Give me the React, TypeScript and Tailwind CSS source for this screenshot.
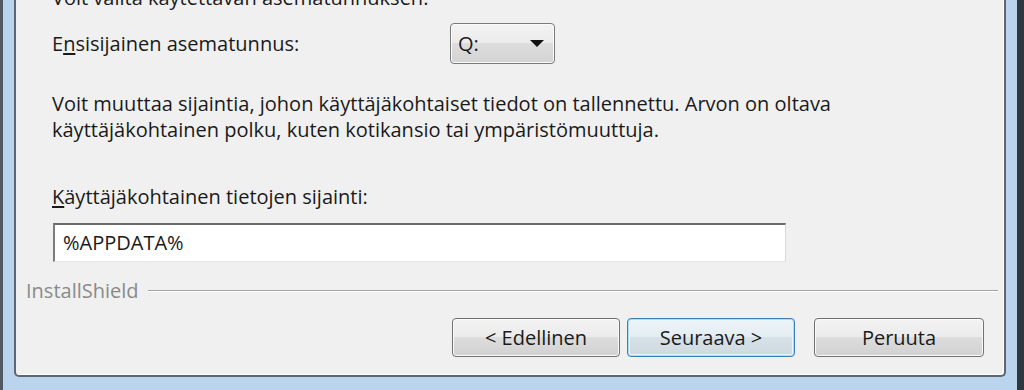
const font = { fontFamily: '"Open Sans", "Noto Sans", sans-serif' }

const WinButton = ({ label, isDefault = false, width = 'w-[168px]' }: { label: string; isDefault?: boolean; width?: string }) => {
  const look = isDefault
    ? 'border-[#3c7fb1] bg-[linear-gradient(#eef5f9_0%,#e4edf2_50%,#d7e2e8_50%,#cdd9e0_100%)] shadow-[inset_0_0_0_1px_#a9dff6,inset_0_0_0_2px_#e6f6fd]'
    : 'border-[#707070] bg-[linear-gradient(#f3f3f3_0%,#ebebeb_50%,#dddddd_50%,#d1d1d1_100%)] shadow-[inset_0_0_0_1px_#fbfbfb]'
  return (
    <button className={`${width} h-[39px] rounded-[4px] border text-[20px] text-[#1a1a1a] ${look}`} style={font}>
      {label}
    </button>
  )
}

const App = () => {
  return (
    <div className="w-[1024px] h-[390px] overflow-hidden flex bg-[#bad4ee] border-l-[3px] border-l-[#4f5863] border-r-[7px] border-r-[#30363d] pl-[11px] pr-[11px] pb-[13px]">
      <div className="flex-1 flex flex-col bg-[#f0f0f0] border-x-2 border-b-2 border-[#5e6771] rounded-b-[5px] shadow-[inset_-1px_-1px_0_#ffffff] text-[20px] text-[#1a1a1a]" style={font}>
        <div className="pl-[36px] flex flex-col">
          <p className="-mt-[15px] h-[26px] leading-[26px] whitespace-nowrap">Voit valita käytettävän asematunnuksen.</p>

          <div className="mt-[12px] flex items-center h-[41px]">
            <span className="w-[398px]">
              E<span className="underline underline-offset-2">n</span>sisijainen asematunnus:
            </span>
            <div className="w-[105px] h-[41px] flex items-center justify-between pl-[7px] pr-[10px] rounded-[4px] border border-[#7a7a7a] bg-[linear-gradient(#f3f3f3_0%,#ebebeb_50%,#dddddd_50%,#d3d3d3_100%)] shadow-[inset_0_0_0_1px_#fbfbfb]">
              <span>Q:</span>
              <svg width="14" height="7" viewBox="0 0 14 7">
                <path d="M0 0 H14 L7 7 Z" fill="#111" />
              </svg>
            </div>
          </div>

          <p className="mt-[27px] leading-[26px] whitespace-nowrap">
            Voit muuttaa sijaintia, johon käyttäjäkohtaiset tiedot on tallennettu. Arvon on oltava
            <br />
            käyttäjäkohtainen polku, kuten kotikansio tai ympäristömuuttuja.
          </p>

          <p className="mt-[41px] leading-[26px] whitespace-nowrap">
            <span className="underline underline-offset-2">K</span>äyttäjäkohtainen tietojen sijainti:
          </p>

          <div className="mt-[13px] ml-[1px] w-[733px] h-[39px] flex items-center pl-[8px] bg-white border-t-2 border-l-2 border-t-[#6a6a6a] border-l-[#7c7c7c] border-r border-b border-r-[#d8d8d8] border-b-[#e6e6e6]">
            %APPDATA%
          </div>
        </div>

        <div className="mt-[16px] h-[26px] flex items-center pl-[10px] pr-[6px]">
          <span className="text-[#8a8a8a]">InstallShield</span>
          <div className="flex-1 ml-[9px] h-[2px] border-t border-t-[#a3a3a3] border-b border-b-[#ffffff]" />
        </div>

        <div className="mt-[14px] flex justify-end pr-[20px]">
          <WinButton label="< Edellinen" />
          <div className="w-[7px]" />
          <WinButton label="Seuraava >" isDefault />
          <div className="w-[19px]" />
          <WinButton label="Peruuta" width="w-[170px]" />
        </div>
      </div>
    </div>
  )
}

export default App
